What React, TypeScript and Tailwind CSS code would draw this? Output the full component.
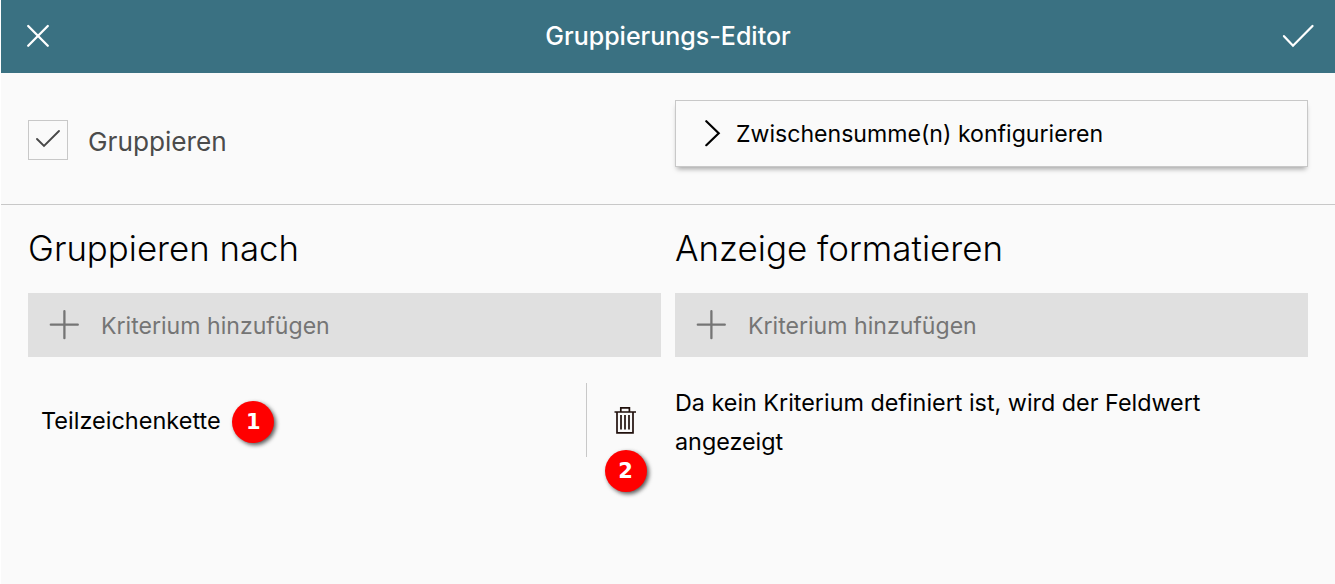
import React from "react";

function Plus() {
  return (
    <svg className="h-[30px] w-[30px] shrink-0" viewBox="0 0 30 30" fill="none" stroke="#757575" strokeWidth="2.3" strokeLinecap="round">
      <path d="M1.8 14.7H28.8M15.4 1.2V28.2" />
    </svg>
  );
}

function AddCriterion() {
  return (
    <button className="flex h-16 w-full items-center bg-[#e0e0e0] pl-[21px] text-left text-[23.1px] text-[#757575]">
      <Plus />
      <span className="ml-[22px] pt-[2px] leading-8">Kriterium hinzufügen</span>
    </button>
  );
}

function Badge({ children }: { children: React.ReactNode }) {
  return (
    <span className="flex h-[42px] w-[42px] items-center justify-center rounded-full bg-[#ff0000] pt-px font-['DejaVu_Sans',sans-serif] text-[21px] leading-none font-bold text-white shadow-[2px_2px_4px_rgba(0,0,0,0.65)]">
      {children}
    </span>
  );
}

export default function App() {
  return (
    <div className="h-[584px] w-[1335px] overflow-hidden border-l border-white bg-[#fafafa] font-['Inter',sans-serif] text-black">
      <header className="flex h-[73px] items-center justify-between bg-[#3a7182] pr-[20px] pb-[2px] pl-[24px] text-white">
        <svg className="h-[26px] w-[26px]" viewBox="0 0 26 26" fill="none" stroke="currentColor" strokeWidth="2.3" strokeLinecap="round">
          <path d="M3.2 3L22.8 22.7M22.8 3L3.2 22.7" />
        </svg>
        <h1 className="pl-[4px] text-[25px] leading-8 font-medium">Gruppierungs-Editor</h1>
        <svg className="h-[26px] w-[34px]" viewBox="0 0 34 26" fill="none" stroke="currentColor" strokeWidth="2.3" strokeLinecap="round">
          <path d="M3 13.2L12 22.7L31.5 3" />
        </svg>
      </header>

      <section className="flex h-[132px] border-b border-[#c8c8c8] pl-[27px]">
        <label className="flex w-[647px] items-start pt-[47px]">
          <span className="flex h-10 w-10 items-center justify-center border border-[#c8c8c8]">
            <svg className="h-[24px] w-[28px]" viewBox="0 0 28 24" fill="none" stroke="#484848" strokeWidth="1.9" strokeLinecap="round">
              <path d="M3 11L10 18L25 3" />
            </svg>
          </span>
          <span className="ml-5 pt-[4px] text-[26.2px] leading-9 text-[#4b4b4b]">Gruppieren</span>
        </label>
        <button className="mt-[27px] flex h-[67px] w-[633px] items-center border border-[#c8c8c8] pl-[28px] text-left text-[23.1px] shadow-[0_4px_5px_-2px_rgba(0,0,0,0.35)]">
          <svg className="h-[28px] w-[18px]" viewBox="0 0 18 28" fill="none" stroke="currentColor" strokeWidth="2.2" strokeLinecap="round">
            <path d="M2.3 1.2L14.7 13.2L2.3 25.2" />
          </svg>
          <span className="ml-[14px] pt-[2px]">Zwischensumme(n) konfigurieren</span>
        </button>
      </section>

      <main className="flex gap-[14px] pl-[27px]">
        <section className="w-[633px]">
          <h2 className="h-[88px] pt-[19px] text-[34.8px] leading-[48px] font-light">Gruppieren nach</h2>
          <AddCriterion />
          <div className="mt-[26px] flex h-[120px] items-start">
            <div className="flex h-[74px] w-[559px] shrink-0 items-center border-r border-[#c8c8c8] pl-[13px]">
              <span className="pt-[2px] text-[23.5px]">Teilzeichenkette</span>
              <span className="ml-[11.5px] pt-[3px]"><Badge>1</Badge></span>
            </div>
            <div className="flex w-[77px] shrink-0 flex-col items-center pt-[23px]">
              <svg className="mb-[14.5px] h-[29px] w-[24px]" viewBox="0 0 24 29" fill="none" stroke="#20100c" strokeWidth="1.7">
                <path d="M.5 6H22M6.8 6V1.8H15.4V6M3 6V26.8H19V6M7 9V23.5M11 9V23.5M15 9V23.5" />
              </svg>
              <Badge>2</Badge>
            </div>
          </div>
        </section>
        <section className="w-[633px]">
          <h2 className="h-[88px] pt-[19px] text-[34.95px] leading-[48px] font-light">Anzeige formatieren</h2>
          <AddCriterion />
          <p className="mt-[26px] w-[560px] text-[23.33px] leading-[39px]">Da kein Kriterium definiert ist, wird der Feldwert angezeigt</p>
        </section>
      </main>
    </div>
  );
}
